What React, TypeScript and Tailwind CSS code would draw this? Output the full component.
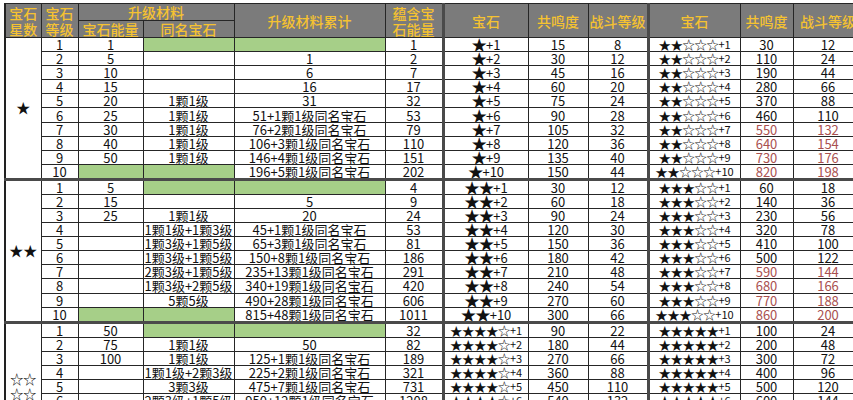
import React from "react";

const G = "__G__";

type Group = {
  star: React.ReactNode;
  starCls: string;
  energy: (string | number)[];
  same: string[];
  cum: string[];
  contain: (string | number)[];
  gem: string;
  gemSmall: boolean;
  res: number[];
  lv: number[];
  gem2: string;
  res2: number[];
  lv2: number[];
  red: boolean;
};

const range = (start: number, step: number) =>
  Array.from({ length: 10 }, (_, i) => start + step * i);

const groups: Group[] = [
  {
    star: "★",
    starCls: "text-[14px]",
    energy: [1, 5, 10, 15, 20, 25, 30, 40, 50, G],
    same: [G, "", "", "", "1颗1级", "1颗1级", "1颗1级", "1颗1级", "1颗1级", G],
    cum: [
      G,
      "1",
      "6",
      "16",
      "31",
      "51+1颗1级同名宝石",
      "76+2颗1级同名宝石",
      "106+3颗1级同名宝石",
      "146+4颗1级同名宝石",
      "196+5颗1级同名宝石",
    ],
    contain: [1, 2, 7, 17, 32, 53, 79, 110, 151, 202],
    gem: "★",
    gemSmall: false,
    res: range(15, 15),
    lv: range(8, 4),
    gem2: "★★☆☆☆",
    res2: [30, 110, 190, 280, 370, 460, 550, 640, 730, 820],
    lv2: [12, 24, 44, 66, 88, 110, 132, 154, 176, 198],
    red: true,
  },
  {
    star: "★★",
    starCls: "text-[14px]",
    energy: [5, 15, 25, "", "", "", "", "", "", G],
    same: [
      G,
      "",
      "1颗1级",
      "1颗1级+1颗3级",
      "1颗3级+1颗5级",
      "1颗3级+1颗5级",
      "2颗3级+1颗5级",
      "1颗3级+2颗5级",
      "5颗5级",
      G,
    ],
    cum: [
      G,
      "5",
      "20",
      "45+1颗1级同名宝石",
      "65+3颗1级同名宝石",
      "150+8颗1级同名宝石",
      "235+13颗1级同名宝石",
      "340+19颗1级同名宝石",
      "490+28颗1级同名宝石",
      "815+48颗1级同名宝石",
    ],
    contain: [4, 9, 24, 53, 81, 186, 291, 420, 606, 1011],
    gem: "★★",
    gemSmall: false,
    res: range(30, 30),
    lv: range(12, 6),
    gem2: "★★★☆☆",
    res2: [60, 140, 230, 320, 410, 500, 590, 680, 770, 860],
    lv2: [18, 36, 56, 78, 100, 122, 144, 166, 188, 200],
    red: true,
  },
  {
    star: (
      <>
        ☆☆
        <br />
        ☆☆
        <br />☆
      </>
    ),
    starCls: "text-[13px] leading-[15px]",
    energy: [50, 75, 100, "", "", "", "", "", "", G],
    same: [
      G,
      "1颗1级",
      "1颗1级",
      "1颗1级+2颗3级",
      "3颗3级",
      "2颗3级+1颗5级",
      "2颗3级+2颗5级",
      "3颗5级",
      "5颗5级",
      G,
    ],
    cum: [
      G,
      "50",
      "125+1颗1级同名宝石",
      "225+2颗1级同名宝石",
      "475+7颗1级同名宝石",
      "950+12颗1级同名宝石",
      "1450+20颗1级同名宝石",
      "2000+30颗1级同名宝石",
      "2800+45颗1级同名宝石",
      "3800+65颗1级同名宝石",
    ],
    contain: [32, 82, 189, 321, 731, 1208, 1736, 2325, 3189, 4213],
    gem: "★★★★☆",
    gemSmall: true,
    res: range(90, 90),
    lv: range(22, 22),
    gem2: "★★★★★",
    res2: range(100, 100),
    lv2: range(24, 24),
    red: false,
  },
];

const B = "border border-[#262626]";
const DL = "border-l-[3px] border-l-[#4a4a4a] border-l-double";
const GREEN = "bg-[#a6cf88]";

function Cell({
  v,
  cls = "",
}: {
  v: React.ReactNode;
  cls?: string;
}) {
  const isG = v === G;
  return (
    <td
      className={`${B} ${cls} ${isG ? GREEN : ""} p-0 text-center whitespace-nowrap overflow-hidden`}
    >
      {isG ? "" : v}
    </td>
  );
}

function Gem({ stars, n, small }: { stars: string; n: number; small: boolean }) {
  return (
    <div className="flex h-[13px] items-center justify-center leading-[13px] overflow-visible">
      <span
        className={
          small
            ? "text-[12.5px] tracking-[-0.5px] leading-[13px]"
            : "text-[15.5px] tracking-[-1px] leading-[13px]"
        }
      >
        {stars}
      </span>
      <span className={small ? "text-[11px] leading-[13px]" : "text-[13px] leading-[13px]"}>
        +{n}
      </span>
    </div>
  );
}

function Head({
  children,
  cls = "",
  rowSpan,
  colSpan,
}: {
  children: React.ReactNode;
  cls?: string;
  rowSpan?: number;
  colSpan?: number;
}) {
  return (
    <th
      rowSpan={rowSpan}
      colSpan={colSpan}
      className={`${B} ${cls} bg-[#7b7b7b] text-[#f5c231] text-[14px] leading-[16px] font-medium p-0 text-center align-middle whitespace-nowrap`}
    >
      {children}
    </th>
  );
}

export default function App() {
  return (
    <div
      className="w-[853px] h-[400px] overflow-hidden bg-white pl-[4px] pt-[3px] text-[#111]"
      style={{ fontFamily: '"Noto Sans CJK SC", "Noto Sans", sans-serif' }}
    >
      <table className="table-fixed border-collapse w-[858px] text-[13px] leading-[13px] border-l-2 border-l-[#222]">
        <colgroup>
          <col className="w-[36px]" />
          <col className="w-[37px]" />
          <col className="w-[65px]" />
          <col className="w-[91px]" />
          <col className="w-[151px]" />
          <col className="w-[58px]" />
          <col className="w-[85px]" />
          <col className="w-[60px]" />
          <col className="w-[60px]" />
          <col className="w-[92px]" />
          <col className="w-[53px]" />
          <col className="w-[70px]" />
        </colgroup>
        <thead>
          <tr className="h-[16px]">
            <Head rowSpan={2}>
              宝石
              <br />
              星数
            </Head>
            <Head rowSpan={2}>
              宝石
              <br />
              等级
            </Head>
            <Head colSpan={2} cls="font-bold">
              升级材料
            </Head>
            <Head rowSpan={2}>升级材料累计</Head>
            <Head rowSpan={2}>
              蕴含宝
              <br />
              石能量
            </Head>
            <Head rowSpan={2} cls={DL}>
              宝石
            </Head>
            <Head rowSpan={2}>共鸣度</Head>
            <Head rowSpan={2}>战斗等级</Head>
            <Head rowSpan={2} cls={DL}>
              宝石
            </Head>
            <Head rowSpan={2}>共鸣度</Head>
            <Head rowSpan={2}>战斗等级</Head>
          </tr>
          <tr className="h-[17px]">
            <Head>宝石能量</Head>
            <Head>同名宝石</Head>
          </tr>
        </thead>
        <tbody>
          {groups.map((g, gi) =>
            Array.from({ length: 10 }, (_, i) => {
              const top =
                i === 0 && gi > 0
                  ? "border-t-[3px] border-t-[#4a4a4a] border-t-double"
                  : "";
              const red = g.red && i >= 6 ? "text-[#a9504f]" : "";
              return (
                <tr key={`${gi}-${i}`} className="h-[14.1px]">
                  {i === 0 && (
                    <td
                      rowSpan={10}
                      className={`${B} ${top} ${g.starCls} p-0 text-center align-middle`}
                    >
                      {g.star}
                    </td>
                  )}
                  <Cell v={i + 1} cls={top} />
                  <Cell v={g.energy[i]} cls={top} />
                  <Cell v={g.same[i]} cls={top} />
                  <Cell v={g.cum[i]} cls={top} />
                  <Cell v={g.contain[i]} cls={top} />
                  <Cell
                    v={<Gem stars={g.gem} n={i + 1} small={g.gemSmall} />}
                    cls={`${top} ${DL}`}
                  />
                  <Cell v={g.res[i]} cls={top} />
                  <Cell v={g.lv[i]} cls={top} />
                  <Cell
                    v={<Gem stars={g.gem2} n={i + 1} small={true} />}
                    cls={`${top} ${DL}`}
                  />
                  <Cell v={g.res2[i]} cls={`${top} ${red}`} />
                  <Cell v={g.lv2[i]} cls={`${top} ${red}`} />
                </tr>
              );
            })
          )}
        </tbody>
      </table>
    </div>
  );
}
